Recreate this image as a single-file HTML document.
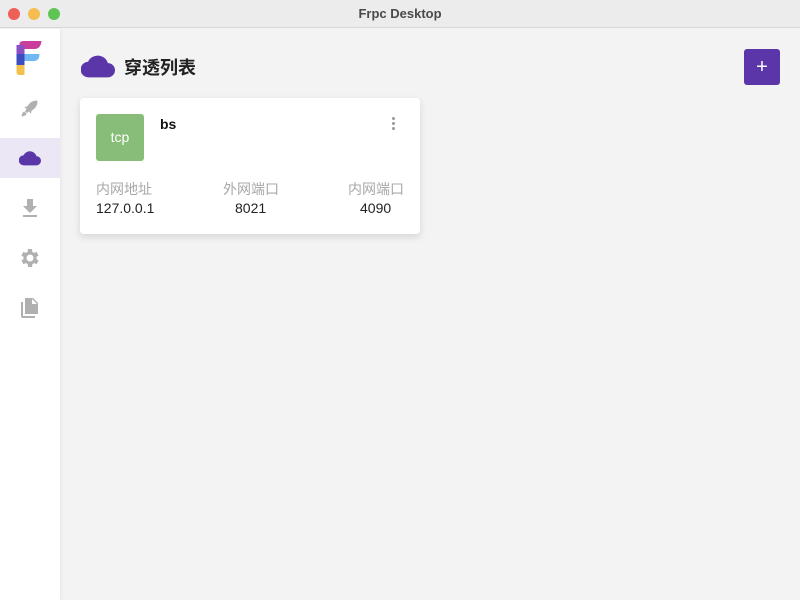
<!DOCTYPE html>
<html><head><meta charset="utf-8"><style>
*{margin:0;padding:0;box-sizing:border-box}
body{width:800px;height:600px;overflow:hidden;background:#f3f3f3;font-family:"Liberation Sans","Noto Sans CJK SC",sans-serif;position:relative}
.title{position:absolute;top:0;left:0;width:800px;height:28px;background:#ececec;border-bottom:1px solid #d8d8d8;text-align:center;font-size:13px;font-weight:bold;color:#4a4a4a;line-height:28px}
.dot{position:absolute;top:8px;width:12px;height:12px;border-radius:50%}
.side{position:absolute;top:29px;left:0;width:60px;height:571px;background:#fff;box-shadow:1px 0 3px rgba(0,0,0,.06)}
.item{position:absolute;left:0;width:60px;height:40px;display:flex;align-items:center;justify-content:center}
.card{position:absolute;left:80px;top:98px;width:340px;height:136px;background:#fff;border-radius:4px;box-shadow:0 3px 8px rgba(0,0,0,.12)}
.tcp{position:absolute;left:16px;top:16px;width:48px;height:47px;background:#87bd78;border-radius:3px;color:#fff;font-size:14px;text-align:center;line-height:47px}
.lbl{position:absolute;top:81px;font-size:14px;color:#a8a8a8}
.val{position:absolute;top:102px;font-size:14px;color:#222}
</style></head><body>
<div class="title">Frpc Desktop
<div class="dot" style="left:8px;background:#ee5f57"></div>
<div class="dot" style="left:28px;background:#f5bd4f"></div>
<div class="dot" style="left:48px;background:#5fc454"></div></div>
<div class="side">
<svg style="position:absolute;left:16px;top:11px" width="27" height="36" viewBox="0 0 26 36">
<path d="M3 4 Q3 1 7 1 H25 Q24 9 18 9 H3Z" fill="#c93e9a"/>
<rect x="0" y="5" width="8" height="10" fill="#8a4fc2"/>
<rect x="0" y="14" width="8" height="11" fill="#3c4dc0"/>
<path d="M8 14 H23 Q23 21 17 21 H8Z" fill="#6fb8f5"/>
<path d="M0 25 H8 V35 H3 Q0 35 0 32Z" fill="#f3c04e"/>
</svg>
<div class="item" style="top:59px"><svg width="20" height="20" viewBox="0 0 24 24"><path d="M20 3c-5 0-9 3-11 7l-4 1 3 2-2 3 2 2 3-2 2 3 1-4c4-2 7-6 7-11zM5 16c-2 1-3 4-3 6 2 0 5-1 6-3z" fill="#b0b0b0"/></svg></div>
<div class="item" style="top:109px;background:#ebe7f5"><svg width="22" height="16" viewBox="0 0 24 16"><path d="M19 6A7.5 7.5 0 0 0 5 5 5 5 0 0 0 5.5 16H19a5 5 0 0 0 0-10z" fill="#5a36a8"/></svg></div>
<div class="item" style="top:159px"><svg width="16" height="18" viewBox="0 0 16 18"><path d="M5 0h6v7h4l-7 7-7-7h4z" fill="#b0b0b0"/><rect x="1" y="16" width="14" height="2" fill="#b0b0b0"/></svg></div>
<div class="item" style="top:209px"><svg width="20" height="20" viewBox="2 2 20 20"><path d="M19.4 13a7.5 7.5 0 0 0 0-2l2.1-1.6-2-3.5-2.5 1a7 7 0 0 0-1.7-1L15 3h-4l-.4 2.9a7 7 0 0 0-1.7 1l-2.5-1-2 3.5L6.6 11a7.5 7.5 0 0 0 0 2l-2.1 1.6 2 3.5 2.5-1a7 7 0 0 0 1.7 1L11 21h4l.4-2.9a7 7 0 0 0 1.7-1l2.5 1 2-3.5zM13 15.5a3.5 3.5 0 1 1 0-7 3.5 3.5 0 0 1 0 7z" fill="#b0b0b0" transform="translate(-1 0)"/></svg></div>
<div class="item" style="top:259px"><svg width="18" height="20" viewBox="0 0 18 20"><path d="M0 4h2v14h12v2H2q-2 0-2-2z" fill="#b0b0b0"/><path d="M4 0h8l5 5v11H4zM11 1v5h5z" fill="#b0b0b0"/></svg></div>
</div>
<svg style="position:absolute;left:81px;top:54px" width="34" height="24" viewBox="0 0 24 16"><path d="M19 6A7.5 7.5 0 0 0 5 5 5 5 0 0 0 5.5 16H19a5 5 0 0 0 0-10z" fill="#5a36a8"/></svg>
<div style="position:absolute;left:124px;top:54px;font-size:18px;font-weight:bold;color:#222">穿透列表</div>
<div style="position:absolute;left:744px;top:49px;width:36px;height:36px;background:#5a36a8;border-radius:3px;color:#fff;font-size:20px;text-align:center;line-height:36px">+</div>
<div class="card">
<div class="tcp">tcp</div>
<div style="position:absolute;left:80px;top:18px;font-size:14px;font-weight:bold;color:#111">bs</div>
<div style="position:absolute;left:312px;top:19px;width:3px">
<div style="width:3px;height:3px;border-radius:50%;background:#999;margin-bottom:2px"></div>
<div style="width:3px;height:3px;border-radius:50%;background:#999;margin-bottom:2px"></div>
<div style="width:3px;height:3px;border-radius:50%;background:#999"></div></div>
<div class="lbl" style="left:16px">内网地址</div>
<div class="val" style="left:16px">127.0.0.1</div>
<div class="lbl" style="left:143px">外网端口</div>
<div class="val" style="left:155px">8021</div>
<div class="lbl" style="left:268px">内网端口</div>
<div class="val" style="left:280px">4090</div>
</div>
</body></html>
